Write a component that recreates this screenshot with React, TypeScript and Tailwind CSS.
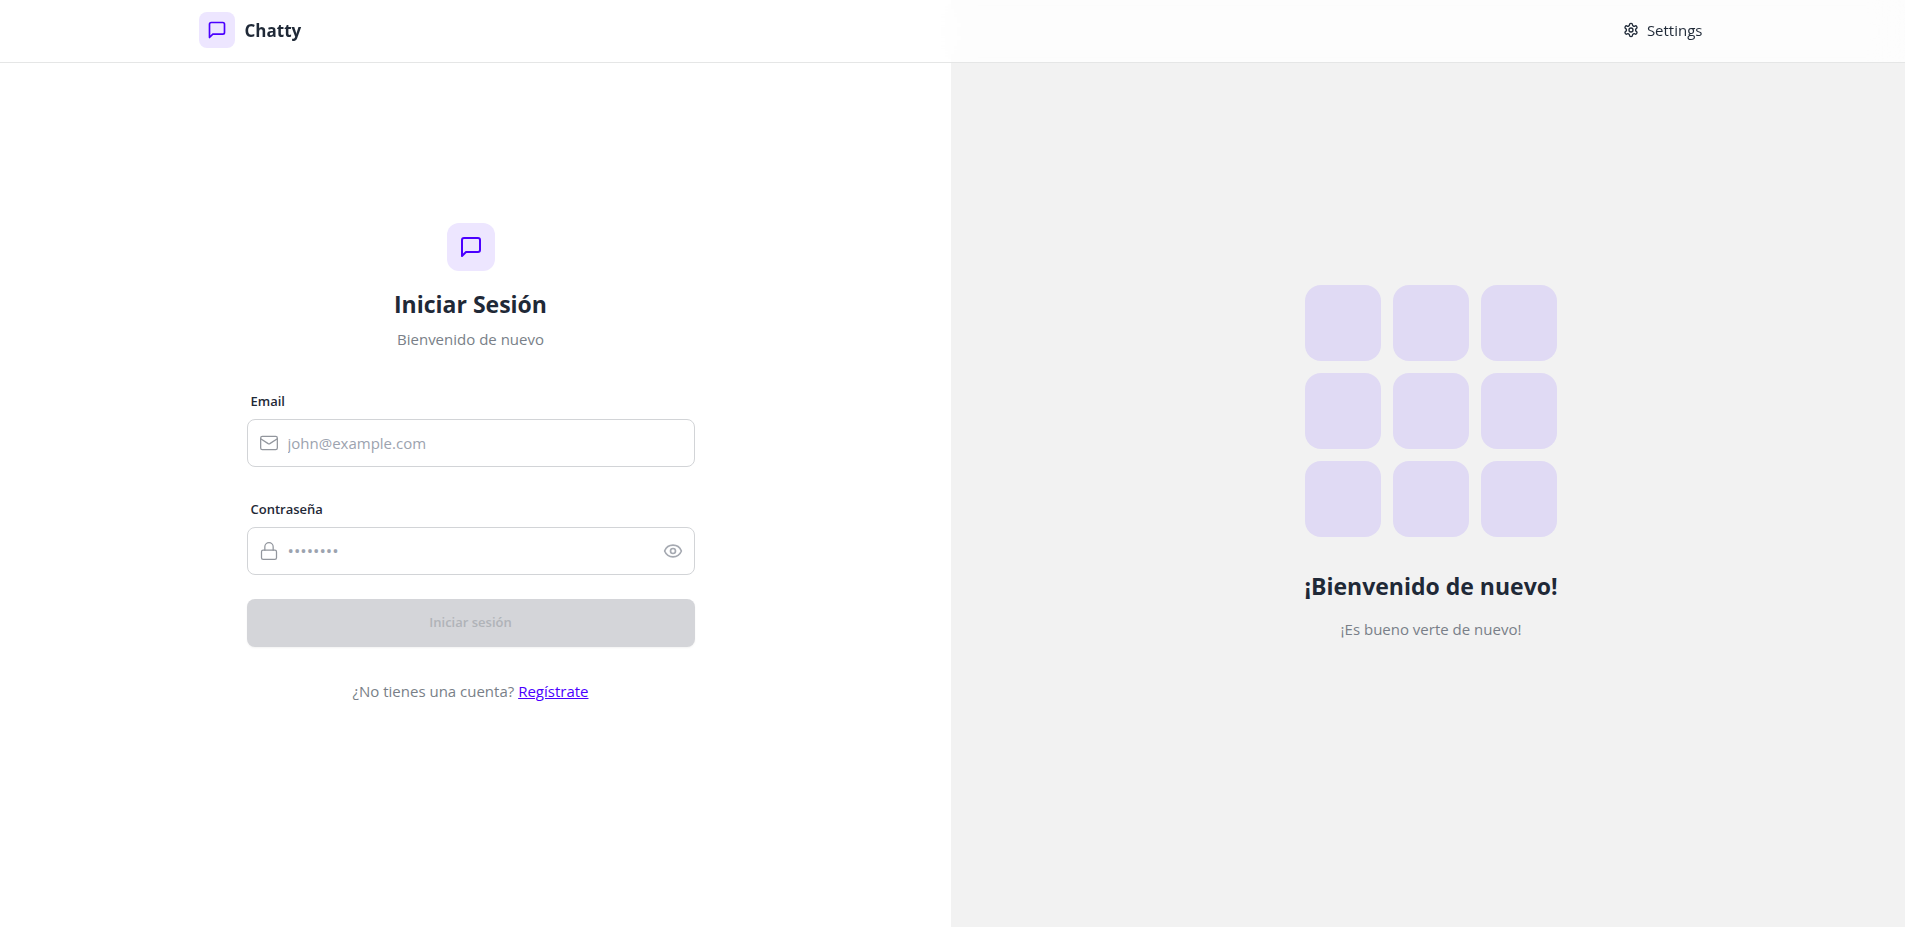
import { useState } from "react";
import type { ReactNode } from "react";
import { Eye, EyeOff, Lock, Mail } from "lucide-react";

function LineIcon({ className, children }: { className: string; children: ReactNode }) {
  return (
    <svg
      viewBox="0 0 24 24"
      fill="none"
      stroke="currentColor"
      strokeWidth={2}
      strokeLinecap="round"
      strokeLinejoin="round"
      aria-hidden="true"
      className={className}
    >
      {children}
    </svg>
  );
}

function MessageIcon({ className }: { className: string }) {
  return (
    <LineIcon className={className}>
      <path d="M21 15a2 2 0 0 1-2 2H7l-4 4V5a2 2 0 0 1 2-2h14a2 2 0 0 1 2 2z" />
    </LineIcon>
  );
}

function GearIcon({ className }: { className: string }) {
  return (
    <LineIcon className={className}>
      <path d="M12.22 2h-.44a2 2 0 0 0-2 2v.18a2 2 0 0 1-1 1.73l-.43.25a2 2 0 0 1-2 0l-.15-.08a2 2 0 0 0-2.73.73l-.22.38a2 2 0 0 0 .73 2.73l.15.1a2 2 0 0 1 1 1.72v.51a2 2 0 0 1-1 1.74l-.15.09a2 2 0 0 0-.73 2.73l.22.38a2 2 0 0 0 2.73.73l.15-.08a2 2 0 0 1 2 0l.43.25a2 2 0 0 1 1 1.73V20a2 2 0 0 0 2 2h.44a2 2 0 0 0 2-2v-.18a2 2 0 0 1 1-1.73l.43-.25a2 2 0 0 1 2 0l.15.08a2 2 0 0 0 2.73-.73l.22-.39a2 2 0 0 0-.73-2.73l-.15-.08a2 2 0 0 1-1-1.74v-.5a2 2 0 0 1 1-1.74l.15-.09a2 2 0 0 0 .73-2.73l-.22-.38a2 2 0 0 0-2.73-.73l-.15.08a2 2 0 0 1-2 0l-.43-.25a2 2 0 0 1-1-1.73V4a2 2 0 0 0-2-2z" />
      <circle cx="12" cy="12" r="3" />
    </LineIcon>
  );
}

function Header() {
  return (
    <header className="fixed inset-x-0 top-0 z-40 border-b border-[#e5e6e6] bg-white/80 backdrop-blur-lg">
      <div className="mx-auto flex w-full max-w-[1556px] items-center justify-between pt-3 pr-7 pb-3.5 pl-6">
        <a href="#" className="flex items-center gap-2.5">
          <span className="flex size-9 items-center justify-center rounded-lg bg-[#ede6ff]">
            <MessageIcon className="size-5 text-[#4b00ff]" />
          </span>
          <h1 className="pt-0.5 text-[17px] leading-7 font-bold">Chatty</h1>
        </a>
        <a href="#" className="flex items-center gap-2 text-[15px] leading-6">
          <GearIcon className="size-4" />
          <span>Settings</span>
        </a>
      </div>
    </header>
  );
}

const inputClass =
  "h-12 w-full rounded-lg border border-[#d2d4d7] bg-white pl-10 text-[15px] leading-6 outline-none placeholder:text-[#9ca3af] placeholder:opacity-100 focus:border-[#4b00ff]";

const fieldIconClass = "pointer-events-none absolute top-3.5 left-3 size-5 text-[#92969d]";

function LoginForm() {
  const [email, setEmail] = useState("");
  const [password, setPassword] = useState("");
  const [visible, setVisible] = useState(false);

  return (
    <div className="w-full max-w-md">
      <div className="mb-8 flex flex-col items-center text-center">
        <span className="mb-4 flex size-12 items-center justify-center rounded-xl bg-[#ede6ff]">
          <MessageIcon className="size-6 text-[#4b00ff]" />
        </span>
        <h2 className="mb-1.5 text-[23px] leading-[34px] font-bold">Iniciar Sesión</h2>
        <p className="text-[15px] leading-6 text-[#797f88]">Bienvenido de nuevo</p>
      </div>

      <form className="flex flex-col gap-6" onSubmit={(e) => e.preventDefault()}>
        <div>
          <label htmlFor="email" className="block px-1 py-2 text-[13px] leading-5 font-semibold">
            Email
          </label>
          <div className="relative">
            <Mail className={fieldIconClass} strokeWidth={1.5} />
            <input
              id="email"
              type="email"
              placeholder="john@example.com"
              value={email}
              onChange={(e) => setEmail(e.target.value)}
              className={inputClass + " pr-4"}
            />
          </div>
        </div>

        <div>
          <label htmlFor="password" className="block px-1 py-2 text-[13px] leading-5 font-semibold">
            Contraseña
          </label>
          <div className="relative">
            <Lock className={fieldIconClass} strokeWidth={1.5} />
            <input
              id="password"
              type={visible ? "text" : "password"}
              placeholder="••••••••"
              value={password}
              onChange={(e) => setPassword(e.target.value)}
              className={inputClass + " pr-10 placeholder:text-[17px]"}
            />
            <button
              type="button"
              aria-label="Mostrar contraseña"
              onClick={() => setVisible(!visible)}
              className="absolute inset-y-0 right-0 flex items-center pr-3 text-[#a5a9b1]"
            >
              {visible ? <EyeOff className="size-5" /> : <Eye className="size-5" />}
            </button>
          </div>
        </div>

        <button
          type="submit"
          disabled={!email || !password}
          className="h-12 w-full rounded-lg bg-[#4b00ff] text-[13px] font-semibold text-white shadow-xs disabled:bg-[#d4d5d9] disabled:text-[#b0b3b8]"
        >
          Iniciar sesión
        </button>
      </form>

      <p className="mt-8 text-center text-[15px] leading-6 text-[#797f88]">
        ¿No tienes una cuenta?{" "}
        <a href="#" className="text-[#4b00ff] underline">
          Regístrate
        </a>
      </p>
    </div>
  );
}

function PatternPanel() {
  return (
    <div className="hidden items-center justify-center bg-[#f2f2f2] pb-0.5 pl-1.5 lg:flex">
      <div className="max-w-md text-center">
        <div className="mx-auto mb-8 grid w-63 grid-cols-3 gap-3">
          {Array.from({ length: 9 }, (_, i) => (
            <div key={i} className="aspect-square rounded-2xl bg-[#e0daf4]" />
          ))}
        </div>
        <h2 className="mb-3.5 text-[23px] leading-[34px] font-bold">¡Bienvenido de nuevo!</h2>
        <p className="text-[15px] leading-6 text-[#797f88]">¡Es bueno verte de nuevo!</p>
      </div>
    </div>
  );
}

export default function App() {
  return (
    <div className="min-h-screen bg-white font-['Open_Sans','Noto_Sans',sans-serif] text-[#1f2937]">
      <Header />
      <main className="grid min-h-screen lg:grid-cols-[951fr_954fr]">
        <div className="flex items-center justify-center px-6 pb-0.5 lg:pr-8.5">
          <LoginForm />
        </div>
        <PatternPanel />
      </main>
    </div>
  );
}
